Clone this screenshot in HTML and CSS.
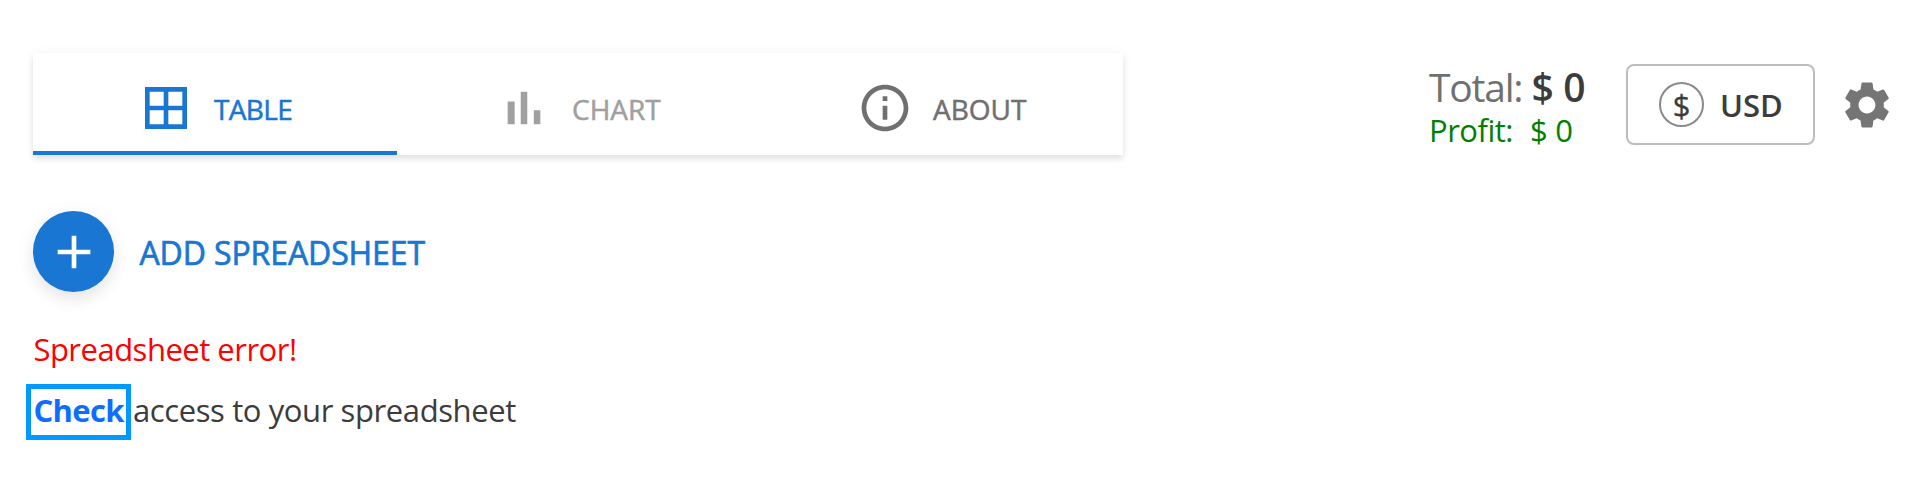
FILE: index.html
```html
<!DOCTYPE html>
<html lang="en">
<head>
<meta charset="utf-8">
<title>Spreadsheet</title>
<link rel="stylesheet" href="styles.css">
</head>
<body>
<header class="header">
  <nav class="tabs">
    <a class="tab tab-active"><svg class="icon" viewBox="0 0 24 24"><path d="M3 3v18h18V3H3zm8 16H5v-6h6v6zm0-8H5V5h6v6zm8 8h-6v-6h6v6zm0-8h-6V5h6v6z"/></svg><span class="tab-label">TABLE</span></a>
    <a class="tab tab-disabled"><svg class="icon" viewBox="0 0 24 24"><path d="M5 9.2h3V19H5V9.2zM10.6 5h2.8v14h-2.8V5zm5.6 8H19v6h-2.8v-6z"/></svg><span class="tab-label">CHART</span></a>
    <a class="tab"><svg class="icon" viewBox="0 0 24 24"><path d="M11 7h2v2h-2zm0 4h2v6h-2zm1-9C6.48 2 2 6.48 2 12s4.48 10 10 10 10-4.48 10-10S17.52 2 12 2zm0 18c-4.41 0-8-3.59-8-8s3.59-8 8-8 8 3.59 8 8-3.59 8-8 8z"/></svg><span class="tab-label">ABOUT</span></a>
  </nav>
  <div class="account">
    <div class="sums">
      <div class="total"><span class="total-label">Total:</span><span class="total-value">$ 0</span></div>
      <div class="profit"><span class="profit-label">Profit:</span><span class="profit-value">$ 0</span></div>
    </div>
    <button class="currency"><span class="coin">$</span><span class="code">USD</span></button>
    <svg class="icon gear" viewBox="0 0 24 24"><path d="M19.14 12.94c.04-.3.06-.61.06-.94 0-.32-.02-.64-.07-.94l2.03-1.58c.18-.14.23-.41.12-.61l-1.92-3.32c-.12-.22-.37-.29-.59-.22l-2.39.96c-.5-.38-1.03-.7-1.62-.94l-.36-2.54c-.04-.24-.24-.41-.48-.41h-3.84c-.24 0-.43.17-.47.41l-.36 2.54c-.59.24-1.13.57-1.62.94l-2.39-.96c-.22-.08-.47 0-.59.22L2.74 8.87c-.12.21-.08.47.12.61l2.03 1.58c-.05.3-.09.63-.09.94s.02.64.07.94l-2.03 1.58c-.18.14-.23.41-.12.61l1.92 3.32c.12.22.37.29.59.22l2.39-.96c.5.38 1.03.7 1.62.94l.36 2.54c.05.24.24.41.48.41h3.84c.24 0 .44-.17.47-.41l.36-2.54c.59-.24 1.13-.56 1.62-.94l2.39.96c.22.08.47 0 .59-.22l1.92-3.32c.12-.22.07-.47-.12-.61l-2.01-1.58zM12 15.6c-1.98 0-3.6-1.62-3.6-3.6s1.62-3.6 3.6-3.6 3.6 1.62 3.6 3.6-1.62 3.6-3.6 3.6z"/></svg>
  </div>
</header>
<main class="main">
  <div class="add"><button class="fab"><svg class="icon" viewBox="0 0 24 24"><path d="M19 13h-6v6h-2v-6H5v-2h6V5h2v6h6v2z"/></svg></button><span class="add-label">ADD SPREADSHEET</span></div>
  <p class="error">Spreadsheet error!</p>
  <p class="hint"><a class="check">Check</a><span class="hint-text">access to your spreadsheet</span></p>
</main>
</body>
</html>
```
FILE: styles.css
```css
* { box-sizing: border-box; }
body { margin: 0; min-height: 480px; background: #fff; color: #3c3c3c; font-family: "Open Sans", "Noto Sans", sans-serif; }
button { font: inherit; color: inherit; padding: 0; background: none; border: 0; }
p { margin: 0; }
.icon { width: 56px; height: 56px; fill: currentColor; flex: none; }
.header { display: flex; justify-content: space-between; padding: 53px 25px 0 33.4px; height: 155px; }
.tabs { display: flex; width: 1090px; height: 102px; box-shadow: 0 4px 6px rgba(0,0,0,.1), 0 0 12px rgba(0,0,0,.04); }
.tab { flex: 1; display: flex; align-items: center; justify-content: center; gap: 20px; font-size: 28px; color: #707070; border-bottom: 4px solid transparent; padding-top: 12px; }
.tab-active { color: #1976d2; border-color: #1976d2; }
.tab-active .tab-label { letter-spacing: -0.7px; }
.tab-disabled { color: #a0a0a0; }
.tab-label { padding-top: 1px; -webkit-text-stroke: 0.5px currentColor; }
.account { display: flex; }
.sums { width: 197px; padding-top: 8px; white-space: nowrap; }
.total { font-size: 39px; line-height: 52px; height: 48px; display: flex; gap: 9px; }
.total-label { color: #707070; letter-spacing: -1.2px; }
.total-value { font-weight: 600; letter-spacing: -0.3px; }
.profit { font-size: 31px; line-height: 42px; color: #008000; display: flex; gap: 17px; height: 40px; }
.profit-label { letter-spacing: -0.5px; }
.profit-value { letter-spacing: -0.2px; }
.currency { display: flex; align-items: center; width: 189px; height: 81px; margin-top: 11px; border: 2px solid #bdbdbd; border-radius: 8px; padding-left: 31px; font-size: 31px; }
.coin { width: 45px; height: 45px; border: 2px solid #8a8a8a; border-radius: 50%; display: flex; justify-content: center; align-items: center; margin-right: 16px; padding-top: 1px; -webkit-text-stroke: 0.3px currentColor; }
.code { font-weight: 600; }
.gear { margin: 24px 0 0 24px; color: #757575; }
.main { padding: 56px 33.4px 0; }
.add { display: flex; align-items: center; gap: 25px; color: #1976d2; font-size: 32px; }
.add-label { padding-top: 2px; letter-spacing: -0.1px; -webkit-text-stroke: 0.7px currentColor; }
.fab { display: flex; align-items: center; justify-content: center; width: 81px; height: 81px; border-radius: 50%; background: #1976d2; color: #fff; box-shadow: 0 8px 16px rgba(0,0,0,.08), 0 1px 24px rgba(0,0,0,.04); }
.error { margin-top: 27px; font-size: 31px; line-height: 61px; letter-spacing: -0.5px; color: #f00; }
.hint { display: flex; align-items: flex-start; padding-top: 9px; font-size: 31px; line-height: 43px; }
.check { font-weight: 700; letter-spacing: -0.6px; color: #0d6efd; outline: 5px solid #09f; padding: 0 2px 3px; margin: 0 7px 0 -2px; }
.hint-text { letter-spacing: -0.4px; }
```
